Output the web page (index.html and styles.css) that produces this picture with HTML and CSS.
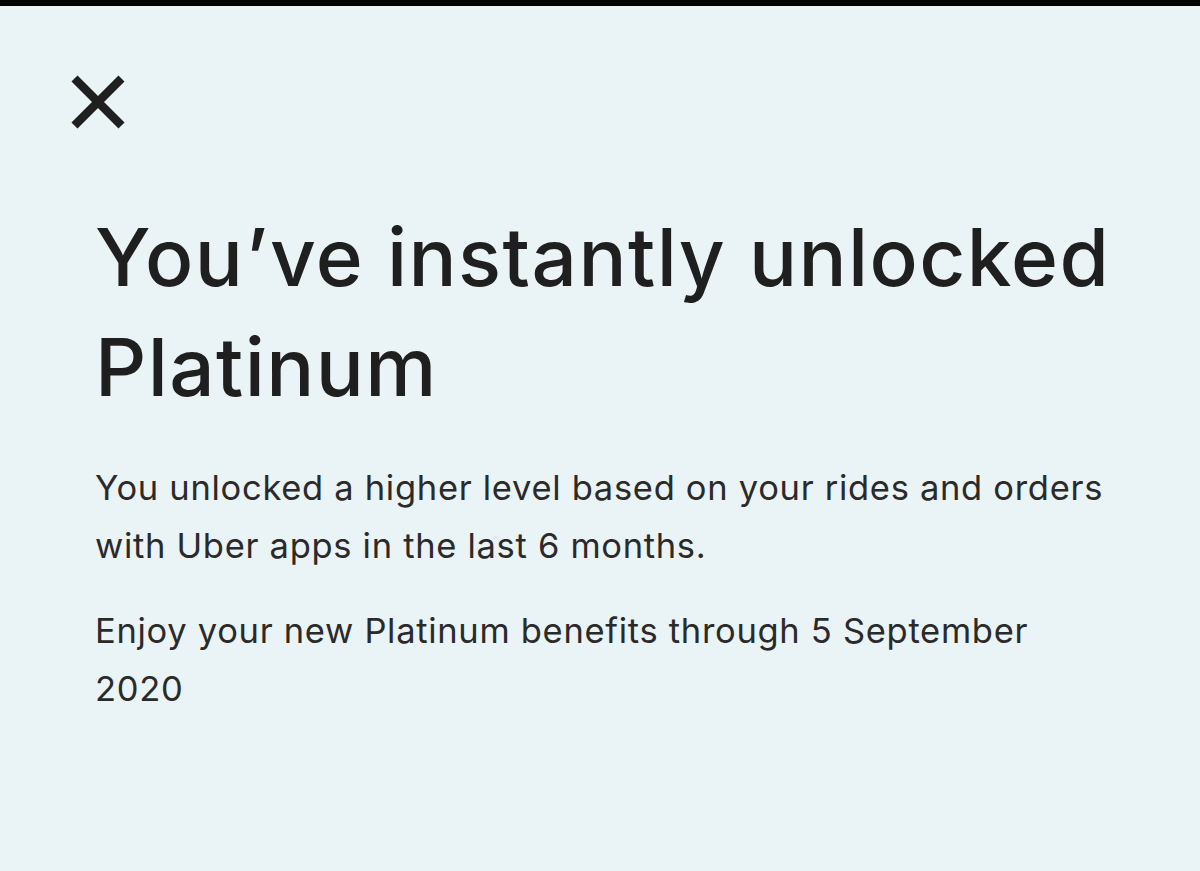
FILE: index.html
```html
<!DOCTYPE html>
<html lang="en">
<head>
<meta charset="utf-8">
<title>Platinum unlocked</title>
<link rel="stylesheet" href="styles.css">
</head>
<body>
<div class="topbar"></div>
<main class="screen">
  <button class="close" aria-label="Close">
    <svg viewBox="0 0 54 54" width="54" height="54"><path d="M3.5 3.5 L50.5 50.5 M50.5 3.5 L3.5 50.5" stroke="#1f1f1f" stroke-width="8.5" stroke-linecap="butt"/></svg>
  </button>
  <section class="content">
    <h1 class="title">You’ve instantly unlocked Platinum</h1>
    <p class="text">You unlocked a higher level based on your rides and orders with Uber apps in the last 6 months.</p>
    <p class="text">Enjoy your new Platinum benefits through 5 September 2020</p>
  </section>
</main>
</body>
</html>
```
FILE: styles.css
```css
html, body {
  margin: 0;
  padding: 0;
  height: 100%;
}
body {
  background: #eaf3f6;
  font-family: Inter, "Noto Sans", sans-serif;
  color: #1f1f1f;
}
.topbar {
  height: 6px;
  background: #000;
}
.screen {
  padding: 69px 0 0 71px;
}
.close {
  display: block;
  padding: 0;
  margin: 0;
  border: 0;
  background: none;
  width: 54px;
  height: 54px;
}
.close svg {
  display: block;
}
.content {
  padding-left: 24px;
  width: 1017px;
}
.title {
  margin: 73px 0 0 0;
  font-size: 80px;
  line-height: 110px;
  font-weight: 500;
  letter-spacing: 1.4px;
}
.text {
  margin: 36.5px 0 0 0;
  font-size: 34.5px;
  line-height: 58px;
  font-weight: 400;
  letter-spacing: 0.7px;
  color: #2a2a2a;
}
.text + .text {
  margin-top: 27px;
}
```
